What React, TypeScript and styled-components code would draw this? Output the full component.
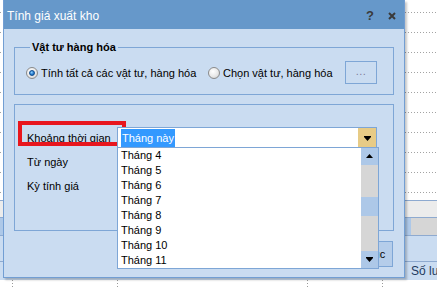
import React from 'react';
import styled, { createGlobalStyle } from 'styled-components';

const GlobalStyle = createGlobalStyle`
  html, body { margin: 0; padding: 0; background: #fff; }
  body { font-family: "Liberation Sans", Arial, sans-serif; font-size: 11px; color: #000; }
  * { box-sizing: border-box; }
`;

const BLUE_BORDER = '#7ea6d6';
const BODY_BG = '#cadcf1';
const SCROLL_BLUE = '#adc8e8';

const Screen = styled.div`
  position: relative;
  width: 437px;
  height: 287px;
  overflow: hidden;
  background: #fff;
`;

/* ---------- page behind the dialog ---------- */

const Backdrop = styled.div`
  display: flex;
  flex-direction: column;
  width: 100%;
`;

const SheetRow = styled.div<{ $h: number }>`
  height: ${({ $h }) => $h}px;
  background-image: linear-gradient(to right, #a3a3a3 1px, transparent 1px);
  background-size: 3px 1px;
  background-repeat: repeat-x;
  background-position: left bottom;
`;

const Spacer = styled.div<{ $h: number }>`
  height: ${({ $h }) => $h}px;
`;

const GridBand = styled.div<{ $h: number; $bg: string }>`
  display: flex;
  height: ${({ $h }) => $h}px;
  border-top: 1px solid #8eaad0;
  background: ${({ $bg }) => $bg};
`;

const BandCell = styled.div<{ $w?: number; $bg: string }>`
  flex: ${({ $w }) => ($w ? `0 0 ${$w}px` : '1')};
  background: ${({ $bg }) => $bg};
`;

const HeaderBand = styled.div`
  display: flex;
  align-items: center;
  height: 19px;
  padding-left: 411px;
  border-top: 1px solid #8eaad0;
  background: ${BODY_BG};
  color: #1e3a5f;
  font-size: 12px;
  white-space: nowrap;
`;

const FooterBand = styled.div`
  display: flex;
  height: 9px;
  background: #fff;
`;

const FooterCell = styled.div<{ $w?: number }>`
  flex: ${({ $w }) => ($w ? `0 0 ${$w}px` : '1')};
  &:not(:first-child) {
    background-image: linear-gradient(to bottom, #9a9a9a 1px, transparent 1px);
    background-size: 1px 3px;
    background-repeat: repeat-y;
    background-position: left top;
  }
`;

/* ---------- dialog ---------- */

const Dialog = styled.div`
  position: absolute;
  left: 3px;
  top: 0;
  width: 402px;
  height: 278px;
  display: flex;
  flex-direction: column;
  border: 1px solid #729ed3;
  border-top: none;
  background: ${BODY_BG};
  box-shadow: 2px 2px 2px rgba(0, 0, 0, 0.22);
`;

const TitleBar = styled.div`
  display: flex;
  align-items: center;
  height: 29px;
  padding: 2px 6px 0 3px;
  background: #6698ca;
  color: #fff;
  font-size: 12px;
`;

const TitleText = styled.span`
  flex: 1;
`;

const TitleButton = styled.span`
  display: flex;
  align-items: center;
  justify-content: center;
  width: 12px;
  margin-left: 10px;
  color: #3a3a3a;
  font-weight: bold;
  font-size: 13px;
`;

const Body = styled.div`
  display: flex;
  flex-direction: column;
  padding: 12px 10px 0 10px;
`;

const GroupBox = styled.fieldset<{ $pad: string }>`
  position: relative;
  margin: 0;
  min-width: 0;
  border: 1px solid ${BLUE_BORDER};
  padding: ${({ $pad }) => $pad};
`;

const Legend = styled.legend`
  margin-left: 4px;
  padding: 0 2px;
  font-weight: bold;
  font-size: 11px;
  line-height: 13px;
`;

const RadioRow = styled.div`
  display: flex;
  align-items: center;
  height: 23px;
`;

const RadioOption = styled.label<{ $w?: number }>`
  display: flex;
  align-items: center;
  gap: 3px;
  flex: ${({ $w }) => ($w ? `0 0 ${$w}px` : 'none')};
  white-space: nowrap;
`;

const RadioDot = styled.span<{ $checked?: boolean }>`
  position: relative;
  flex: none;
  width: 12px;
  height: 12px;
  border-radius: 50%;
  border: 1px solid #8a8a8a;
  background: radial-gradient(circle at 40% 35%, #ffffff 0, #e8e8e8 55%, #c9c9c9 100%);
  &::after {
    content: '';
    display: ${({ $checked }) => ($checked ? 'block' : 'none')};
    position: absolute;
    inset: 2px;
    border-radius: 50%;
    border: 1px solid #0e4c8f;
    background: radial-gradient(circle at 40% 35%, #8fd0ff 0, #2a7fd0 55%, #125aa8 100%);
  }
`;

const DotsButton = styled.button`
  margin-left: auto;
  width: 32px;
  height: 23px;
  padding: 0 0 4px;
  border: 1px solid ${BLUE_BORDER};
  background: ${BODY_BG};
  color: #7d7a9a;
  font-family: "Liberation Sans", Arial, sans-serif;
  font-size: 11px;
  letter-spacing: 0.5px;
`;

const FieldList = styled.div`
  display: flex;
  flex-direction: column;
  gap: 2px;
`;

const FieldRow = styled.div`
  position: relative;
  display: flex;
  align-items: center;
  height: 22px;
`;

const FieldLabel = styled.span`
  flex: 0 0 90px;
  white-space: nowrap;
`;

const Highlight = styled.div`
  position: absolute;
  left: -9px;
  top: -6px;
  width: 108px;
  height: 25px;
  border: 4px solid #e8161e;
  pointer-events: none;
`;

const Combo = styled.div`
  position: relative;
  display: flex;
  align-items: center;
  width: 260px;
  height: 22px;
  border: 1px solid ${BLUE_BORDER};
  background: #fff;
  padding-left: 3px;
`;

const ComboValue = styled.span`
  flex: 1;
  display: flex;
  align-items: center;
`;

const Selected = styled.span`
  padding: 0 1px;
  line-height: 18px;
  background: #3399ff;
  color: #fff;
`;

const ComboArrow = styled.span`
  display: flex;
  align-items: center;
  justify-content: center;
  align-self: stretch;
  width: 18px;
  background: #e7cb86;
`;

const DropList = styled.div`
  position: absolute;
  left: -1px;
  top: calc(100% - 1px);
  z-index: 2;
  display: flex;
  width: 262px;
  height: 122px;
  border: 1px solid ${BLUE_BORDER};
  background: #fff;
`;

const Items = styled.ul`
  flex: 1;
  margin: 0;
  padding: 0;
  list-style: none;
`;

const Item = styled.li`
  height: 15px;
  line-height: 15px;
  padding-left: 3px;
  white-space: nowrap;
`;

const ScrollBar = styled.div`
  display: flex;
  flex-direction: column;
  width: 17px;
  background: #d6d6d6;
`;

const ScrollButton = styled.div`
  display: flex;
  align-items: center;
  justify-content: center;
  height: 17px;
  background: ${SCROLL_BLUE};
`;

const ScrollTrack = styled.div`
  flex: 1;
  padding-top: 32px;
`;

const ScrollThumb = styled.div`
  height: 19px;
  background: ${SCROLL_BLUE};
`;

const Footer = styled.div`
  display: flex;
  justify-content: flex-end;
  gap: 6px;
  margin-top: 10px;
  padding-right: 1px;
`;

const FooterButton = styled.button<{ $w: number }>`
  width: ${({ $w }) => $w}px;
  height: 26px;
  padding: 0;
  border: 1px solid ${BLUE_BORDER};
  background: #b5cdea;
  color: #000;
  font-family: "Liberation Sans", Arial, sans-serif;
  font-size: 11px;
`;

const Arrow = ({ up }: { up?: boolean }) => (
  <svg width="7" height="5" viewBox="0 0 7 5">
    {up ? <path d="M3.5 0L7 4H0z" fill="#000" /> : <path d="M0 0h7v1H0zM0 1h7L3.5 5z" fill="#000" />}
  </svg>
);

const CloseIcon = () => (
  <svg width="8" height="8" viewBox="0 0 8 8">
    <path d="M1 1l6 6M7 1L1 7" stroke="#3a3a3a" strokeWidth="2" />
  </svg>
);

const months = ['Tháng 4', 'Tháng 5', 'Tháng 6', 'Tháng 7', 'Tháng 8', 'Tháng 9', 'Tháng 10', 'Tháng 11'];

export default function App() {
  return (
    <>
      <GlobalStyle />
      <Screen>
        <Backdrop>
          <SheetRow $h={13} />
          {Array.from({ length: 9 }).map((_, i) => (
            <SheetRow key={i} $h={20} />
          ))}
          <Spacer $h={7} />
          <GridBand $h={17} $bg="#ececec" />
          <GridBand $h={18} $bg="#d6d6d6">
            <BandCell $w={411} $bg={SCROLL_BLUE} />
            <BandCell $bg="#d6d6d6" />
          </GridBand>
          <GridBand $h={26} $bg={BODY_BG} />
          <HeaderBand>Số lượng</HeaderBand>
          <FooterBand>
            <FooterCell $w={12} />
            <FooterCell $w={105} />
            <FooterCell $w={190} />
            <FooterCell $w={75} />
            <FooterCell />
          </FooterBand>
        </Backdrop>

        <Dialog>
          <TitleBar>
            <TitleText>Tính giá xuất kho</TitleText>
            <TitleButton>?</TitleButton>
            <TitleButton>
              <CloseIcon />
            </TitleButton>
          </TitleBar>
          <Body>
            <GroupBox $pad="7px 16px 10px 11px">
              <Legend>Vật tư hàng hóa</Legend>
              <RadioRow>
                <RadioOption $w={182}>
                  <RadioDot $checked />
                  Tính tất cả các vật tư, hàng hóa
                </RadioOption>
                <RadioOption>
                  <RadioDot />
                  Chọn vật tư, hàng hóa
                </RadioOption>
                <DotsButton>...</DotsButton>
              </RadioRow>
            </GroupBox>

            <GroupBox $pad="22px 16px 33px 12px" style={{ marginTop: 9 }}>
              <FieldList>
                <FieldRow>
                  <Highlight />
                  <FieldLabel>Khoảng thời gian</FieldLabel>
                  <Combo>
                    <ComboValue>
                      <Selected>Tháng này</Selected>
                    </ComboValue>
                    <ComboArrow>
                      <Arrow />
                    </ComboArrow>
                    <DropList>
                      <Items>
                        {months.map(m => (
                          <Item key={m}>{m}</Item>
                        ))}
                      </Items>
                      <ScrollBar>
                        <ScrollButton>
                          <Arrow up />
                        </ScrollButton>
                        <ScrollTrack>
                          <ScrollThumb />
                        </ScrollTrack>
                        <ScrollButton>
                          <Arrow />
                        </ScrollButton>
                      </ScrollBar>
                    </DropList>
                  </Combo>
                </FieldRow>
                <FieldRow>
                  <FieldLabel>Từ ngày</FieldLabel>
                </FieldRow>
                <FieldRow>
                  <FieldLabel>Kỳ tính giá</FieldLabel>
                </FieldRow>
              </FieldList>
            </GroupBox>

            <Footer>
              <FooterButton $w={72}>Thực hiện</FooterButton>
              <FooterButton $w={56}>Kết thúc</FooterButton>
            </Footer>
          </Body>
        </Dialog>
      </Screen>
    </>
  );
}
